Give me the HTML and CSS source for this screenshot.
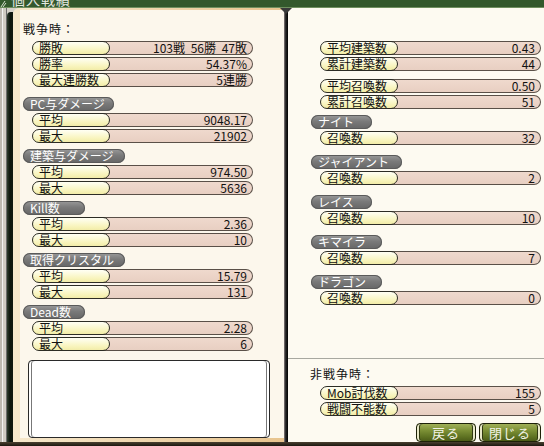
FILE: index.html
```html
<!DOCTYPE html>
<html lang="ja">
<head>
<meta charset="utf-8">
<title>個人戦績</title>
<link rel="stylesheet" href="styles.css">
</head>
<body>
<div class="win">
  <div class="titlebar">
    <svg class="ticon" width="7" height="8" viewBox="0 0 7 8"><path d="M1 7 L5 1 M3 7 L6 3" stroke="#d8e0d0" stroke-width="1" fill="none"/></svg>
    <span class="ttext">個人戦績</span>
  </div>
  <div class="main">
    <div class="edge"></div>
    <div class="darkbar"></div>
    <div class="lframe">
      <div class="lpanel">
        <div class="hdr">戦争時：</div>
        <div class="rows">
          <div class="row"><span class="lbl">勝敗</span><span class="val">103戦 56勝 47敗</span></div>
          <div class="row"><span class="lbl">勝率</span><span class="val">54.37%</span></div>
          <div class="row"><span class="lbl">最大連勝数</span><span class="val">5連勝</span></div>
        </div>
        <div class="sec first">
          <div class="pill w91">PC与ダメージ</div>
          <div class="row"><span class="lbl">平均</span><span class="val">9048.17</span></div>
          <div class="row"><span class="lbl">最大</span><span class="val">21902</span></div>
        </div>
        <div class="sec">
          <div class="pill w102">建築与ダメージ</div>
          <div class="row"><span class="lbl">平均</span><span class="val">974.50</span></div>
          <div class="row"><span class="lbl">最大</span><span class="val">5636</span></div>
        </div>
        <div class="sec">
          <div class="pill w62">Kill数</div>
          <div class="row"><span class="lbl">平均</span><span class="val">2.36</span></div>
          <div class="row"><span class="lbl">最大</span><span class="val">10</span></div>
        </div>
        <div class="sec">
          <div class="pill w102">取得クリスタル</div>
          <div class="row"><span class="lbl">平均</span><span class="val">15.79</span></div>
          <div class="row"><span class="lbl">最大</span><span class="val">131</span></div>
        </div>
        <div class="sec">
          <div class="pill w62">Dead数</div>
          <div class="row"><span class="lbl">平均</span><span class="val">2.28</span></div>
          <div class="row"><span class="lbl">最大</span><span class="val">6</span></div>
        </div>
        <div class="memo"></div>
      </div>
    </div>
    <div class="divider"></div>
    <div class="rpanel">
      <div class="rtop">
        <div class="rows">
          <div class="row"><span class="lbl">平均建築数</span><span class="val">0.43</span></div>
          <div class="row"><span class="lbl">累計建築数</span><span class="val">44</span></div>
        </div>
        <div class="rows g2">
          <div class="row"><span class="lbl">平均召喚数</span><span class="val">0.50</span></div>
          <div class="row"><span class="lbl">累計召喚数</span><span class="val">51</span></div>
        </div>
        <div class="rsec first">
          <div class="pill w61">ナイト</div>
          <div class="row"><span class="lbl">召喚数</span><span class="val">32</span></div>
        </div>
        <div class="rsec">
          <div class="pill w91">ジャイアント</div>
          <div class="row"><span class="lbl">召喚数</span><span class="val">2</span></div>
        </div>
        <div class="rsec">
          <div class="pill w61">レイス</div>
          <div class="row"><span class="lbl">召喚数</span><span class="val">10</span></div>
        </div>
        <div class="rsec">
          <div class="pill w71">キマイラ</div>
          <div class="row"><span class="lbl">召喚数</span><span class="val">7</span></div>
        </div>
        <div class="rsec">
          <div class="pill w71">ドラゴン</div>
          <div class="row"><span class="lbl">召喚数</span><span class="val">0</span></div>
        </div>
      </div>
      <div class="rbottom">
        <div class="hdr">非戦争時：</div>
        <div class="rows">
          <div class="row"><span class="lbl">Mob討伐数</span><span class="val">155</span></div>
          <div class="row"><span class="lbl">戦闘不能数</span><span class="val">5</span></div>
        </div>
        <div class="btns">
          <button class="btn b60">戻る</button>
          <button class="btn b62">閉じる</button>
        </div>
      </div>
    </div>
  </div>
  <div class="bottomline"></div>
</div>
</body>
</html>
```
FILE: styles.css
```css
* { box-sizing: border-box; }
html, body { margin: 0; padding: 0; }
body {
  width: 544px;
  height: 446px;
  overflow: hidden;
  font-family: "Noto Sans CJK JP", "Noto Sans", sans-serif;
  font-size: 12px;
  color: #111;
  background: #d4d0c8;
}
.win { width: 544px; height: 446px; display: flex; flex-direction: column; }

.titlebar {
  height: 8px;
  flex: none;
  background: #33582c;
  border-bottom: 1px solid #6f8f5f;
  overflow: hidden;
  display: flex;
  align-items: flex-start;
}
.ticon { flex: none; }
.ttext {
  display: inline-block;
  margin-left: 4px;
  margin-top: -8px;
  font-size: 14px;
  line-height: 14px;
  color: #e4e8e0;
  letter-spacing: 1px;
}

.main { height: 434px; flex: none; display: flex; }
.edge {
  width: 7px;
  flex: none;
  background: linear-gradient(to right, #bdb9b1 0, #bdb9b1 2px, #f2f2f2 2px, #f2f2f2 3px, #cfcbc3 3px, #cfcbc3 6px, #6c6c6c 6px);
}
.darkbar {
  width: 6px;
  flex: none;
  margin-top: 4px;
  background: linear-gradient(to right, #2e3e2e, #0c140c 50%, #101810);
  border-top-left-radius: 4px;
}
.lframe {
  width: 271px;
  flex: none;
  padding: 2px 0 4px 7px;
  background: linear-gradient(to right, #f6e8cc, #e8c48e);
  border-top-left-radius: 6px;
}
.lpanel {
  width: 264px;
  height: 100%;
  background: #fcf7ec;
  padding: 11px 0 0 3px;
  display: flex;
  flex-direction: column;
  align-items: flex-start;
}
.hdr {
  height: 16px;
  line-height: 16px;
  font-size: 12px;
  letter-spacing: 1px;
  margin-bottom: 4px;
}
.rows { display: flex; flex-direction: column; gap: 2px; }
.lpanel .rows { margin-left: 9px; }

.row {
  display: flex;
  width: 221px;
  height: 14px;
}
.lbl {
  position: relative;
  z-index: 1;
  width: 78px;
  flex: none;
  height: 14px;
  border: 1px solid #2c2c24;
  border-radius: 7px;
  background: linear-gradient(to bottom, #fffff4, #f8f4bc 70%, #f2eca8);
  padding-left: 6px;
  line-height: 12px;
  white-space: nowrap;
}
.val {
  flex: 1;
  height: 14px;
  margin-left: -7px;
  padding: 0 5px 0 0;
  border: 1px solid #5a5048;
  border-left: none;
  border-radius: 0 7px 7px 0;
  background: linear-gradient(to bottom, #efd9cd, #e8cfc2);
  text-align: right;
  line-height: 12px;
  white-space: nowrap;
  word-spacing: 3px;
}

.sec { display: flex; flex-direction: column; gap: 2px; margin-top: 6px; }
.sec.first { margin-top: 10px; }
.sec .row { margin-left: 9px; }

.pill {
  height: 14px;
  border-radius: 7px;
  background: linear-gradient(to bottom, #9a9a9a, #7a7a7a 45%, #666 100%);
  box-shadow: inset 0 0 0 1px #5a5a5a;
  color: #fff;
  padding-left: 7px;
  line-height: 14px;
  white-space: nowrap;
}
.w61 { width: 61px; }
.w62 { width: 62px; }
.w71 { width: 71px; }
.w91 { width: 91px; }
.w102 { width: 102px; }

.memo {
  margin: 9px 0 0 5px;
  width: 242px;
  height: 78px;
  background: #fff;
  border: 1px solid #2a2a2a;
  border-radius: 4px;
  box-shadow: inset 2px 0 0 #fff, inset 3px 0 0 #777, inset -2px 0 0 #fff, inset -3px 0 0 #777;
}

.divider {
  position: relative;
  width: 4px;
  flex: none;
  background: linear-gradient(to right, #8a8080, #2a2a2a 40%, #000);
}
.divider::before {
  content: "";
  position: absolute;
  top: 0;
  left: -4px;
  border-left: 6px solid transparent;
  border-right: 6px solid transparent;
  border-top: 6px solid #3a3a3a;
}

.rpanel {
  flex: 1;
  min-width: 0;
  background: #fdfaf1;
  display: flex;
  flex-direction: column;
}
.rtop {
  flex: 1;
  padding: 33px 0 0 23px;
  display: flex;
  flex-direction: column;
  align-items: flex-start;
}
.rtop .rows { margin-left: 9px; }
.rtop .rows.g2 { margin-top: 8px; }
.rsec { display: flex; flex-direction: column; gap: 2px; margin-top: 10px; }
.rsec.first { margin-top: 6px; }
.rsec .row { margin-left: 9px; }

.rbottom {
  height: 84px;
  flex: none;
  border-top: 1px solid #a8a8a0;
  padding: 7px 0 0 22px;
}
.rbottom .rows { margin-left: 10px; }
.btns {
  display: flex;
  justify-content: flex-end;
  gap: 3px;
  margin-top: 7px;
  width: 231px;
}
.btn {
  height: 19px;
  padding: 0;
  border: 1px solid #1e2208;
  border-radius: 4px;
  background: linear-gradient(to bottom, #a0b058, #7a8e34 40%, #5e7222 75%, #4c5c18);
  box-shadow: inset 2px 0 0 #e8e8c8, inset 3px 0 0 #303810, inset -2px 0 0 #e8e8c8, inset -3px 0 0 #303810;
  color: #f2f4e6;
  font-family: "Noto Sans CJK JP", "Noto Sans", sans-serif;
  font-size: 13px;
  line-height: 17px;
  letter-spacing: 1px;
  text-align: center;
}
.b60 { width: 60px; }
.b62 { width: 62px; }

.bottomline {
  height: 4px;
  flex: none;
  background: linear-gradient(to bottom, #4a4030, #1c1810);
}
```
